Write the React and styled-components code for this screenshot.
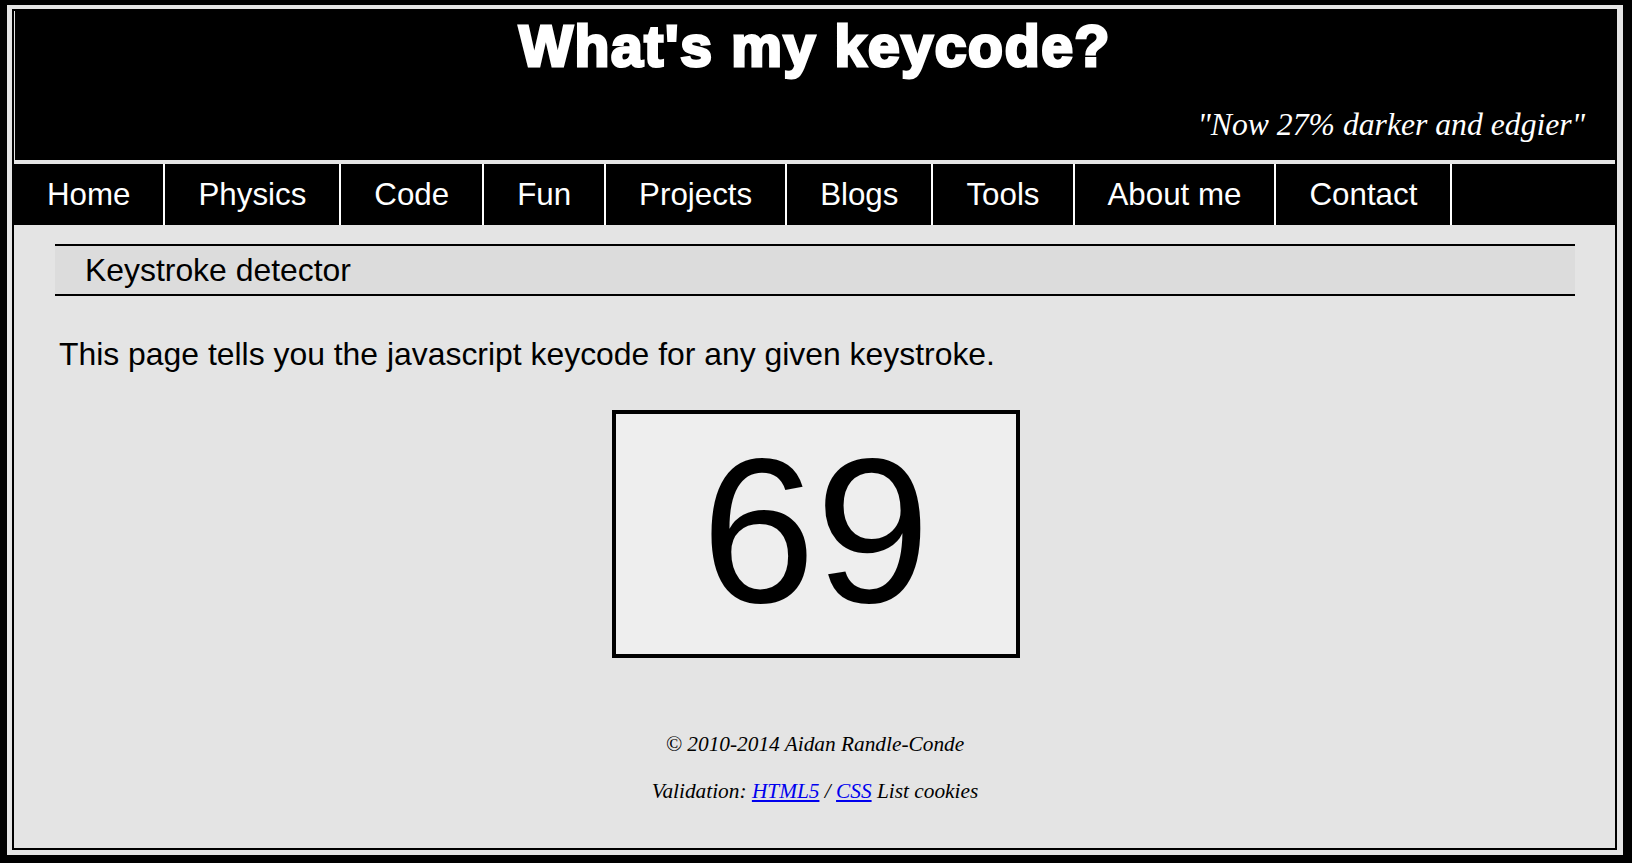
import React from "react";
import styled, { createGlobalStyle } from "styled-components";

const GlobalStyle = createGlobalStyle`
  html, body {
    margin: 0;
    padding: 0;
    background: #000;
  }
  body {
    font-family: "Liberation Sans", Arial, sans-serif;
  }
  * { box-sizing: border-box; }
`;

const Frame = styled.div`
  margin: 5px 9px 8px 7px;
  height: calc(100vh - 13px);
  border: 5px solid #e5e5e5;
  border-top-width: 4px;
  border-right-width: 6px;
  display: flex;
`;

const Inner = styled.div`
  flex: 1;
  border: 2px solid #000;
  background: #e4e4e4;
  display: flex;
  flex-direction: column;
  min-width: 0;
`;

const Header = styled.header`
  background: #000;
  padding: 5px 30px 19px;
  border-bottom: 4px solid #e5e5e5;
  margin-left: 1px;
`;

const Title = styled.h1`
  margin: 0;
  height: 60px;
  font-family: "Liberation Sans", Arial, sans-serif;
  font-weight: bold;
  font-size: 57px;
  line-height: 60px;
  text-align: center;
  color: #fff;
  -webkit-text-stroke: 3px #fff;
  letter-spacing: 1.7px;
`;

const Tagline = styled.p`
  margin: 33px 0 0;
  font-family: "Liberation Serif", "Times New Roman", serif;
  font-style: italic;
  font-size: 31.7px;
  line-height: 32px;
  text-align: right;
  color: #fff;
`;

const Nav = styled.nav`
  display: flex;
  height: 61px;
  background: #000;
`;

const NavItem = styled.a`
  display: block;
  padding: 0 33px;
  border-right: 2px solid #fff;
  font-family: "Liberation Sans", Arial, sans-serif;
  font-size: 31.3px;
  line-height: 61px;
  color: #fff;
  text-decoration: none;
  white-space: nowrap;
`;

const Main = styled.main`
  flex: 1;
  padding: 19px 40px 0 41px;
  display: flex;
  flex-direction: column;
`;

const SectionBar = styled.h2`
  margin: 0;
  height: 52px;
  border-top: 2px solid #000;
  border-bottom: 2px solid #000;
  background: #dcdcdc;
  padding-left: 30px;
  font-family: "Liberation Sans", Arial, sans-serif;
  font-weight: normal;
  font-size: 31.9px;
  line-height: 48px;
  color: #000;
`;

const Intro = styled.p`
  margin: 40px 0 0 4px;
  font-family: "Liberation Sans", Arial, sans-serif;
  font-size: 31.9px;
  line-height: 37px;
  color: #000;
`;

const KeyBox = styled.div`
  align-self: center;
  margin: 37px 0 0 1px;
  width: 408px;
  height: 248px;
  border: 4px solid #000;
  background: #eeeeee;
  text-align: center;
  font-family: "Liberation Sans", Arial, sans-serif;
  font-size: 206px;
  line-height: 234px;
  color: #000;
`;

const Footer = styled.footer`
  margin-top: 74px;
  text-align: center;
  font-family: "Liberation Serif", "Times New Roman", serif;
  font-style: italic;
  font-size: 21.33px;
  line-height: 24.5px;
  color: #000;
`;

const FooterLine = styled.p`
  margin: ${(p) => (p.$first ? "0" : "22.5px 0 0")};
`;

const FooterLink = styled.a`
  color: #0000ee;
  text-decoration: underline;
`;

const navItems = [
  "Home",
  "Physics",
  "Code",
  "Fun",
  "Projects",
  "Blogs",
  "Tools",
  "About me",
  "Contact",
];

export default function App() {
  return (
    <>
      <GlobalStyle />
      <Frame>
        <Inner>
          <Header>
            <Title>What's my keycode?</Title>
            <Tagline>"Now 27% darker and edgier"</Tagline>
          </Header>
          <Nav>
            {navItems.map((item) => (
              <NavItem key={item} href="#">
                {item}
              </NavItem>
            ))}
          </Nav>
          <Main>
            <SectionBar>Keystroke detector</SectionBar>
            <Intro>
              This page tells you the javascript keycode for any given keystroke.
            </Intro>
            <KeyBox>69</KeyBox>
            <Footer>
              <FooterLine $first>© 2010-2014 Aidan Randle-Conde</FooterLine>
              <FooterLine>
                Validation: <FooterLink href="#">HTML5</FooterLink> /{" "}
                <FooterLink href="#">CSS</FooterLink> List cookies
              </FooterLine>
            </Footer>
          </Main>
        </Inner>
      </Frame>
    </>
  );
}
